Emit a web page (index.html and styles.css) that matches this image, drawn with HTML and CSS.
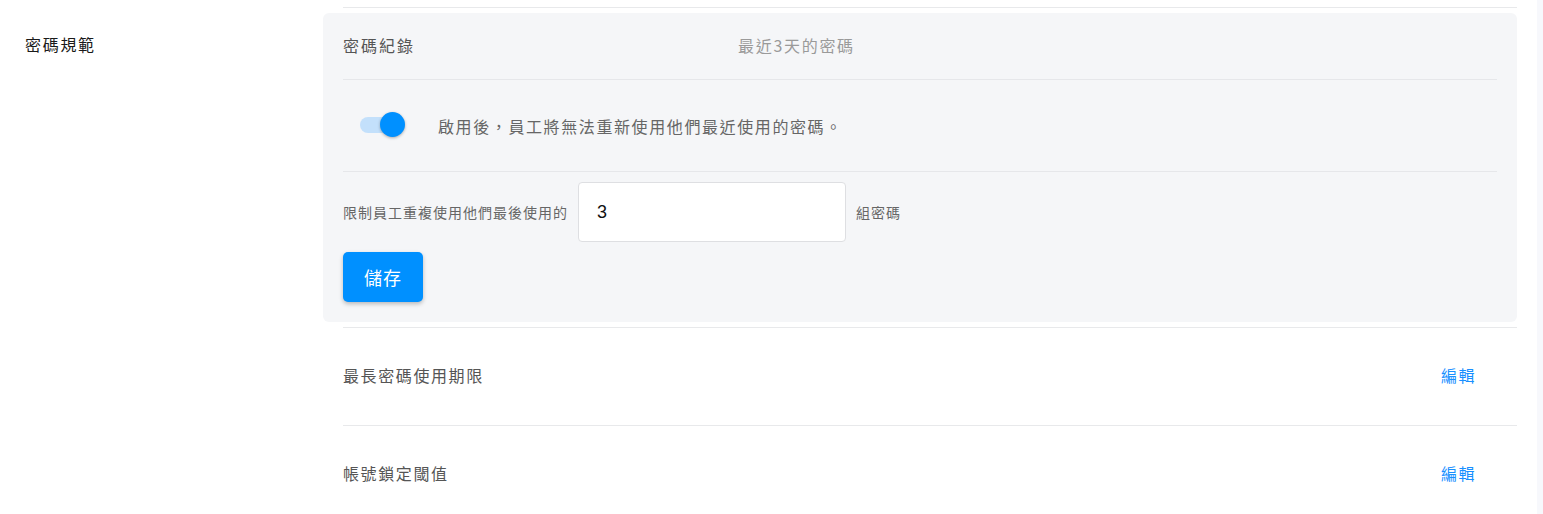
FILE: index.html
```html
<!DOCTYPE html>
<html lang="zh-Hant">
<head>
<meta charset="utf-8">
<title>密碼規範</title>
<link rel="stylesheet" href="styles.css">
</head>
<body>
<div class="page">
  <main class="main">
    <div class="side-label">密碼規範</div>
    <section class="content">
      <div class="divider"></div>
      <div class="panel">
        <div class="panel-head">
          <span class="panel-title">密碼紀錄</span>
          <span class="panel-value">最近3天的密碼</span>
        </div>
        <div class="toggle-row">
          <span class="switch"><span class="switch-track"></span><span class="switch-knob"></span></span>
          <span class="toggle-text">啟用後，員工將無法重新使用他們最近使用的密碼。</span>
        </div>
        <div class="input-row">
          <span class="small-text">限制員工重複使用他們最後使用的</span>
          <input class="num-input" type="text" value="3">
          <span class="small-text">組密碼</span>
        </div>
        <button class="save-btn">儲存</button>
      </div>
      <div class="divider after-panel"></div>
      <div class="setting-row">
        <span class="setting-name">最長密碼使用期限</span>
        <a class="edit-link">編輯</a>
      </div>
      <div class="divider"></div>
      <div class="setting-row">
        <span class="setting-name">帳號鎖定閾值</span>
        <a class="edit-link">編輯</a>
      </div>
    </section>
  </main>
  <div class="scroll-strip"></div>
</div>
</body>
</html>
```

FILE: styles.css
```css
* { box-sizing: border-box; }
html, body { margin: 0; padding: 0; background: #fff; }
body {
  font-family: "Noto Sans CJK TC", "Noto Sans", sans-serif;
  height: 514px;
  overflow: hidden;
}
.page { display: flex; height: 514px; }
.main { flex: 1; display: flex; }
.scroll-strip { width: 6px; background: #f7f8fc; }

.side-label {
  width: 323px;
  padding: 32px 0 0 25px;
  font-size: 16px;
  letter-spacing: 1.7px;
  line-height: 24px;
  color: #1a1a1a;
}

.content {
  flex: 1;
  padding: 7px 20px 0 0;
}
.divider {
  height: 1px;
  background: #e8e9eb;
  margin-left: 20px;
}
.panel {
  margin-top: 5px;
  background: #f5f6f8;
  border-radius: 6px;
  padding: 0 20px 20px;
}
.panel-head {
  display: flex;
  align-items: center;
  height: 67px;
  padding-bottom: 2px;
  border-bottom: 1px solid #e6e7ea;
}
.panel-title {
  width: 395px;
  font-size: 16px;
  letter-spacing: 2px;
  color: #555;
}
.panel-value {
  font-size: 16px;
  letter-spacing: 1.7px;
  color: #9a9a9a;
}
.toggle-row {
  display: flex;
  align-items: center;
  height: 92px;
  border-bottom: 1px solid #e6e7ea;
  padding-left: 17px;
}
.switch {
  position: relative;
  width: 45px;
  height: 25px;
  display: inline-block;
  margin-right: 33px;
}
.switch-track {
  position: absolute;
  left: 0;
  top: 4px;
  width: 36px;
  height: 16px;
  border-radius: 8px;
  background: #c3e0fb;
}
.switch-knob {
  position: absolute;
  right: 0;
  top: -1px;
  width: 25px;
  height: 25px;
  border-radius: 50%;
  background: #0090ff;
  box-shadow: 0 1px 3px rgba(0, 0, 0, 0.3);
}
.toggle-text {
  font-size: 16px;
  letter-spacing: 1.6px;
  color: #666;
}
.input-row {
  display: flex;
  align-items: center;
  gap: 10px;
  margin-top: 10px;
}
.small-text {
  font-size: 14px;
  letter-spacing: 1px;
  color: #666;
}
.num-input {
  width: 268px;
  height: 60px;
  border: 1px solid #dedfe2;
  border-radius: 4px;
  background: #fff;
  padding: 0 18px;
  font-family: "Liberation Sans", Arial, sans-serif;
  font-size: 18px;
  color: #111;
  outline: none;
}
.save-btn {
  display: block;
  margin-top: 10px;
  width: 80px;
  height: 50px;
  border: none;
  border-radius: 5px;
  background: #0090ff;
  color: #fff;
  font-family: "Noto Sans CJK TC", sans-serif;
  font-size: 18px;
  letter-spacing: 1px;
  box-shadow: 0 2px 4px rgba(0, 0, 0, 0.25);
}
.after-panel { margin-top: 5px; }
.setting-row {
  display: flex;
  align-items: center;
  justify-content: space-between;
  height: 97px;
  padding-left: 20px;
  padding-right: 41px;
  padding-bottom: 3px;
}
.setting-name {
  font-size: 16px;
  letter-spacing: 1.6px;
  color: #555;
}
.edit-link {
  font-size: 16px;
  letter-spacing: 1.5px;
  color: #1890ff;
  cursor: pointer;
}
```
